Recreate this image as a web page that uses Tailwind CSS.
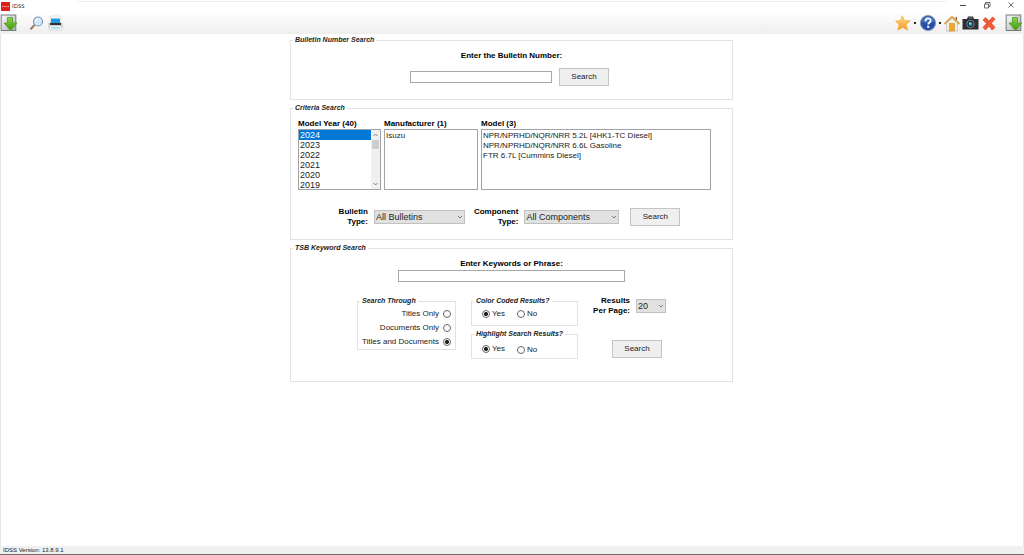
<!DOCTYPE html>
<html lang="en">
<head>
    <meta charset="UTF-8">
    <meta name="viewport" content="width=device-width, initial-scale=1.0">
    <title>IDSS</title>
    <script src="https://cdn.jsdelivr.net/npm/@tailwindcss/browser@4"></script>
    <style>
        body { font-family: "Liberation Sans", Arial, sans-serif; }
        option { min-height: 0; padding: 0 1px; }
        #make option, #model option { padding-top: 1px; }
        option:checked { background: #0078d7 linear-gradient(#0078d7, #0078d7); color: #fff; -webkit-text-fill-color: #fff; }
    </style>
</head>
<body class="min-h-screen flex flex-col bg-white text-black text-[8px] leading-[10px]">

    <!-- Shared icons -->
    <svg class="absolute size-0" aria-hidden="true">
        <defs>
            <linearGradient id="green" x1="0" y1="0" x2="0" y2="1"><stop offset="0" stop-color="#8fd24a"/><stop offset="1" stop-color="#3c9a10"/></linearGradient>
            <linearGradient id="gold" x1="0" y1="0" x2="0" y2="1"><stop offset="0" stop-color="#ffe08a"/><stop offset="1" stop-color="#f79a1c"/></linearGradient>
            <linearGradient id="steel" x1="0" y1="0" x2="1" y2="1"><stop offset="0" stop-color="#fdfdfd"/><stop offset="1" stop-color="#a9adb0"/></linearGradient>
        </defs>
        <symbol id="icon-download" viewBox="0 0 18 18">
            <rect x="1.2" y="1" width="14.6" height="15.5" fill="url(#steel)" stroke="#777c7f" stroke-width="1"/>
            <path d="M7.500 3.500h5v5.500H17L10.500 16.500 4 9h3.500z" fill="url(#green)" stroke="#4da122" stroke-width=".8"/>
        </symbol>
        <symbol id="icon-chevron" viewBox="0 0 6 6">
            <path d="M1 2l2 2 2-2" fill="none" stroke="#666" stroke-width=".8"/>
        </symbol>
    </svg>

    <!-- Title bar -->
    <header class="h-3 flex items-start justify-between bg-white">
        <div class="flex items-center gap-[2px] pl-px pt-px">
            <svg class="w-[9px] h-[9px]" viewBox="0 0 9 9"><rect width="9" height="9" fill="#e0201c"/><path d="M1 4h1v1H1zM2.500 4h1.500v1H2.500zM4.500 4H6v1H4.500zM6.500 4H8v1H6.500z" fill="#f6a09c"/></svg>
            <h1 class="font-['Open_Sans',sans-serif] text-[6px] text-[#222]">IDSS</h1>
        </div>
        <div class="grow self-start h-px mt-px ml-[52px] mr-3 bg-[#ececec]"></div>
        <div class="flex gap-4 pr-[9px] pt-px">
            <button aria-label="Minimize"><svg class="w-2 h-2" viewBox="0 0 8 8"><path d="M1 4.500h6" stroke="#444" stroke-width="1"/></svg></button>
            <button aria-label="Restore"><svg class="w-2 h-2" viewBox="0 0 8 8"><path d="M1.500 3h4v4h-4zM2.500 3v-1.500h4.500v4H5.500" fill="none" stroke="#444" stroke-width=".8"/></svg></button>
            <button aria-label="Close"><svg class="w-2 h-2" viewBox="0 0 8 8"><path d="M1.500 1.500l5 5M6.500 1.500l-5 5" stroke="#444" stroke-width=".8"/></svg></button>
        </div>
    </header>

    <!-- Toolbar -->
    <nav class="h-[22px] flex items-center justify-between pr-px bg-linear-to-b from-white to-[#eeeeee]">
        <div class="flex items-center">
            <button aria-label="Download"><svg class="size-[18px]"><use href="#icon-download"/></svg></button>
            <button aria-label="Find" class="ml-[11px]">
                <svg class="size-[15px]" viewBox="0 0 15 15">
                    <path d="M5.500 9L2 12.800" stroke="#9b7a62" stroke-width="2" stroke-linecap="round"/>
                    <circle cx="9" cy="5.500" r="4.500" fill="#d3e9fb" stroke="#8296b4" stroke-width="1.200"/>
                    <path d="M6.500 5.500a2.500 2.500 0 0 1 2.500-2.500" fill="none" stroke="#fff" stroke-width="1.200"/>
                </svg>
            </button>
            <button aria-label="Print" class="ml-[3px]">
                <svg class="w-[17px] h-4" viewBox="0 0 17 16">
                    <path d="M4 1h9l1 5H3z" fill="#fafafa" stroke="#ccc" stroke-width=".5"/>
                    <rect x="4" y="3.500" width="9" height="4.500" fill="#1c9be0"/>
                    <path d="M1 8l3-1.500V8h9V6.500L16 8v5H1z" fill="#d6d6d6"/>
                    <path d="M3 8h11v2H3z" fill="#333"/>
                    <path d="M3 11h11l1 4H2z" fill="#fff" stroke="#bbb" stroke-width=".5"/>
                    <path d="M4 13h9" stroke="#67bdea" stroke-width="1"/>
                </svg>
            </button>
        </div>
        <div class="flex items-center">
            <button aria-label="Favorites"><svg class="size-4" viewBox="0 0 16 16"><path d="M7.200.8l2.300 4.900 5.700.1-4.200 3.800 1.800 5.600-5-2.700-5 2.500 1.300-5.200L.6 6l4.900-.4z" fill="url(#gold)" stroke="#efa63c" stroke-width=".7"/></svg></button>
            <span class="size-[2px] mx-[3px] bg-[#222]"></span>
            <button aria-label="Help">
                <svg class="size-[18px]" viewBox="0 0 18 18">
                    <circle cx="9" cy="9" r="7.600" fill="#2450a8" stroke="#8d9cbd" stroke-width="1"/>
                    <path d="M2.300 8a6.800 6.800 0 0 1 13.400 0q-6.700 2-13.400 0z" fill="#5277c4" opacity=".7"/>
                    <path d="M6.500 7.200c0-3.800 5.200-3.600 5.200-.7 0 2-2.500 1.900-2.500 4" fill="none" stroke="#fff" stroke-width="1.800"/>
                    <rect x="8.200" y="11.800" width="2" height="2" fill="#fff"/>
                </svg>
            </button>
            <span class="size-[2px] mx-[2px] bg-[#222]"></span>
            <button aria-label="Home">
                <svg class="w-[18px] h-[17px]" viewBox="0 0 18 17">
                    <path d="M3.500 8L9 3l5.500 5v8h-11z" fill="#f3efe6" stroke="#b9b2a4" stroke-width=".6"/>
                    <path d="M12.500 2H14v4l-1.500-1.500z" fill="#9a6240"/>
                    <path d="M1.500 9L9 1.800 16.500 9" fill="none" stroke="#d7a850" stroke-width="1.800"/>
                    <rect x="6.700" y="8.500" width="4.800" height="7.500" fill="#f2a826" stroke="#bd7f25" stroke-width=".5"/>
                </svg>
            </button>
            <button aria-label="Camera" class="ml-px">
                <svg class="w-[17px] h-4" viewBox="0 0 17 16">
                    <path d="M.5 4h4.500l1-2.500h5l1 2.500h4.500v10.500H.5z" fill="#2c2e31"/>
                    <path d="M6.500 3h4" stroke="#8b8f94" stroke-width=".8"/>
                    <circle cx="8.500" cy="9" r="3.700" fill="#0d2230" stroke="#8c9298" stroke-width=".9"/>
                    <circle cx="8.500" cy="9" r="2" fill="#3f9bc6"/>
                    <circle cx="8" cy="8.300" r=".8" fill="#d5f0fa"/>
                </svg>
            </button>
            <button aria-label="Exit" class="ml-[3px]"><svg class="w-[14px] h-[15px]" viewBox="0 0 14 15"><path d="M3.500 1.500L7 5l3.500-4L13 3 9.500 7.300l3.500 4.200-3 2.500-3-4-3.500 4L1 11.500l3.500-4L1 4z" fill="#f05a35" stroke="#d9482a" stroke-width=".7"/></svg></button>
            <button aria-label="Download all" class="ml-[9px]"><svg class="size-[18px]"><use href="#icon-download"/></svg></button>
        </div>
    </nav>

    <main class="grow border-x border-[#e5e5e5] pt-px pr-px">
        <div class="w-full max-w-[443px] mx-auto flex flex-col gap-[3px]">

            <!-- Bulletin number -->
            <fieldset class="min-h-[65px] border border-[#e2e2e2]">
                <legend class="ml-[2px] px-[2px] text-[7px] font-bold italic text-[#222]">Bulletin Number Search</legend>
                <form class="flex flex-col items-center pt-[6px]">
                    <label for="bulletin" class="font-bold">Enter the Bulletin Number:</label>
                    <div class="flex items-center gap-[7px] mt-[7px] pr-1">
                        <input id="bulletin" type="text" class="w-[142px] h-3 border border-[#a8a8a8] px-1">
                        <button type="button" class="w-[50px] h-[18px] border border-[#c4c4c4] bg-[#efefef] text-[#222]">Search</button>
                    </div>
                </form>
            </fieldset>

            <!-- Criteria -->
            <fieldset class="min-h-[137px] border border-[#e2e2e2]">
                <legend class="ml-[2px] px-[2px] text-[7px] font-bold italic text-[#222]">Criteria Search</legend>
                <form>
                    <div class="flex gap-[3px] pl-[7px] pt-[6px]">
                        <div class="w-[83px]">
                            <label for="year" class="block font-bold">Model Year (40)</label>
                            <div class="flex h-[61px] border border-[#a0a3aa]">
                                <select id="year" multiple size="6" class="grow h-full text-[9px] leading-[10px] text-[#222] overflow-hidden outline-none [scrollbar-width:none]">
                                    <option selected>2024</option>
                                    <option>2023</option>
                                    <option>2022</option>
                                    <option>2021</option>
                                    <option>2020</option>
                                    <option>2019</option>
                                </select>
                                <div class="w-[9px] flex flex-col items-center bg-[#f0f0f0]" aria-hidden="true">
                                    <svg class="w-[9px] h-[6px] my-[2px] shrink-0 rotate-180"><use href="#icon-chevron"/></svg>
                                    <div class="w-[7px] h-[9px] bg-[#cdcdcd]"></div>
                                    <svg class="w-[9px] h-[6px] my-[2px] shrink-0 mt-auto"><use href="#icon-chevron"/></svg>
                                </div>
                            </div>
                        </div>
                        <div class="w-[94px]">
                            <label for="make" class="block font-bold">Manufacturer (1)</label>
                            <select id="make" multiple class="block w-full h-[61px] border border-[#a0a3aa] text-[8px] leading-[10px] text-[#222] overflow-hidden [scrollbar-width:none]">
                                <option>Isuzu</option>
                            </select>
                        </div>
                        <div class="w-[230px]">
                            <label for="model" class="block font-bold">Model (3)</label>
                            <select id="model" multiple class="block w-full h-[61px] border border-[#a0a3aa] text-[8px] leading-[10px] text-[#222] overflow-hidden [scrollbar-width:none]">
                                <option>NPR/NPRHD/NQR/NRR 5.2L [4HK1-TC Diesel]</option>
                                <option>NPR/NPRHD/NQR/NRR 6.6L Gasoline</option>
                                <option>FTR 6.7L [Cummins Diesel]</option>
                            </select>
                        </div>
                    </div>
                    <div class="flex items-center justify-center mt-[17px] pr-1">
                        <label for="btype" class="font-bold text-right">Bulletin<br>Type:</label>
                        <div class="relative ml-[6px]">
                            <select id="btype" class="block appearance-none w-[91px] h-[14px] border border-[#c0c0c0] bg-[#e1e1e1] pl-px text-[9px] leading-[12px] text-[#222]">
                                <option>All Bulletins</option>
                            </select>
                            <svg class="absolute right-[2px] top-1 size-[6px] pointer-events-none"><use href="#icon-chevron"/></svg>
                        </div>
                        <label for="ctype" class="ml-[9px] font-bold text-right">Component<br>Type:</label>
                        <div class="relative ml-[6px]">
                            <select id="ctype" class="block appearance-none w-[95px] h-[14px] border border-[#c0c0c0] bg-[#e1e1e1] pl-px text-[9px] leading-[12px] text-[#222]">
                                <option>All Components</option>
                            </select>
                            <svg class="absolute right-[2px] top-1 size-[6px] pointer-events-none"><use href="#icon-chevron"/></svg>
                        </div>
                        <button type="button" class="ml-[11px] w-[50px] h-[18px] border border-[#c4c4c4] bg-[#efefef] text-[#222]">Search</button>
                    </div>
                </form>
            </fieldset>

            <!-- Keywords -->
            <fieldset class="min-h-[139px] border border-[#e2e2e2]">
                <legend class="ml-[2px] px-[2px] text-[7px] font-bold italic text-[#222]">TSB Keyword Search</legend>
                <form class="flex flex-col items-center pt-[6px]">
                    <label for="keywords" class="font-bold">Enter Keywords or Phrase:</label>
                    <input id="keywords" type="text" class="w-[227px] h-3 mt-px border border-[#a8a8a8] px-1">

                    <div class="flex items-start gap-[15px] mt-[14px]">
                        <fieldset class="w-[99px] h-[54px] border border-[#e2e2e2]">
                            <legend class="ml-[2px] px-[2px] text-[7px] font-bold italic text-[#222]">Search Through</legend>
                            <div class="flex flex-col items-end gap-1 pt-[3px] pr-1 text-[#222]">
                                <label class="flex items-center gap-1">Titles Only <input type="radio" name="through" class="appearance-none size-2 rounded-full border border-[#666] checked:bg-[radial-gradient(#222_40%,white_55%)]"></label>
                                <label class="flex items-center gap-1">Documents Only <input type="radio" name="through" class="appearance-none size-2 rounded-full border border-[#666] checked:bg-[radial-gradient(#222_40%,white_55%)]"></label>
                                <label class="flex items-center gap-1">Titles and Documents <input type="radio" name="through" checked class="appearance-none size-2 rounded-full border border-[#666] checked:bg-[radial-gradient(#222_40%,white_55%)]"></label>
                            </div>
                        </fieldset>

                        <div class="w-[107px] flex flex-col gap-[3px]">
                            <fieldset class="h-[30px] border border-[#e2e2e2]">
                                <legend class="ml-[2px] px-[2px] text-[7px] font-bold italic text-[#222]">Color Coded Results?</legend>
                                <div class="flex gap-3 pt-[3px] pl-[10px] text-[#222]">
                                    <label class="flex items-center gap-[2px]"><input type="radio" name="color" checked class="appearance-none size-2 rounded-full border border-[#666] checked:bg-[radial-gradient(#222_40%,white_55%)]"> Yes</label>
                                    <label class="flex items-center gap-[2px]"><input type="radio" name="color" class="appearance-none size-2 rounded-full border border-[#666] checked:bg-[radial-gradient(#222_40%,white_55%)]"> No</label>
                                </div>
                            </fieldset>
                            <fieldset class="h-[30px] border border-[#e2e2e2]">
                                <legend class="ml-[2px] px-[2px] text-[7px] font-bold italic text-[#222]">Highlight Search Results?</legend>
                                <div class="flex gap-3 pt-1 pl-[10px] text-[#222]">
                                    <label class="flex items-center gap-[2px]"><input type="radio" name="highlight" checked class="appearance-none size-2 rounded-full border border-[#666] checked:bg-[radial-gradient(#222_40%,white_55%)]"> Yes</label>
                                    <label class="flex items-center gap-[2px] pt-[2px]"><input type="radio" name="highlight" class="appearance-none size-2 rounded-full border border-[#666] checked:bg-[radial-gradient(#222_40%,white_55%)]"> No</label>
                                </div>
                            </fieldset>
                        </div>

                        <div class="w-[73px] flex flex-col items-end">
                            <div class="flex items-center gap-[6px]">
                                <label for="perpage" class="font-bold text-right whitespace-nowrap">Results<br>Per Page:</label>
                                <div class="relative">
                                    <select id="perpage" class="block appearance-none w-[30px] h-[14px] border border-[#c0c0c0] bg-[#e1e1e1] pl-px text-[9px] leading-[12px] text-[#222]">
                                        <option>20</option>
                                    </select>
                                    <svg class="absolute right-[2px] top-1 size-[6px] pointer-events-none"><use href="#icon-chevron"/></svg>
                                </div>
                            </div>
                            <button type="button" class="mt-6 mr-1 w-[50px] h-[18px] border border-[#c4c4c4] bg-[#efefef] text-[#222]">Search</button>
                        </div>
                    </div>
                </form>
            </fieldset>
        </div>
    </main>

    <!-- Status bar -->
    <footer class="h-[9px] pl-[3px] bg-[#f0f0f0] border-b border-[#6b6b6b] text-[6px] leading-[9px] text-[#222]">IDSS Version: 13.8.9.1</footer>
</body>
</html>
